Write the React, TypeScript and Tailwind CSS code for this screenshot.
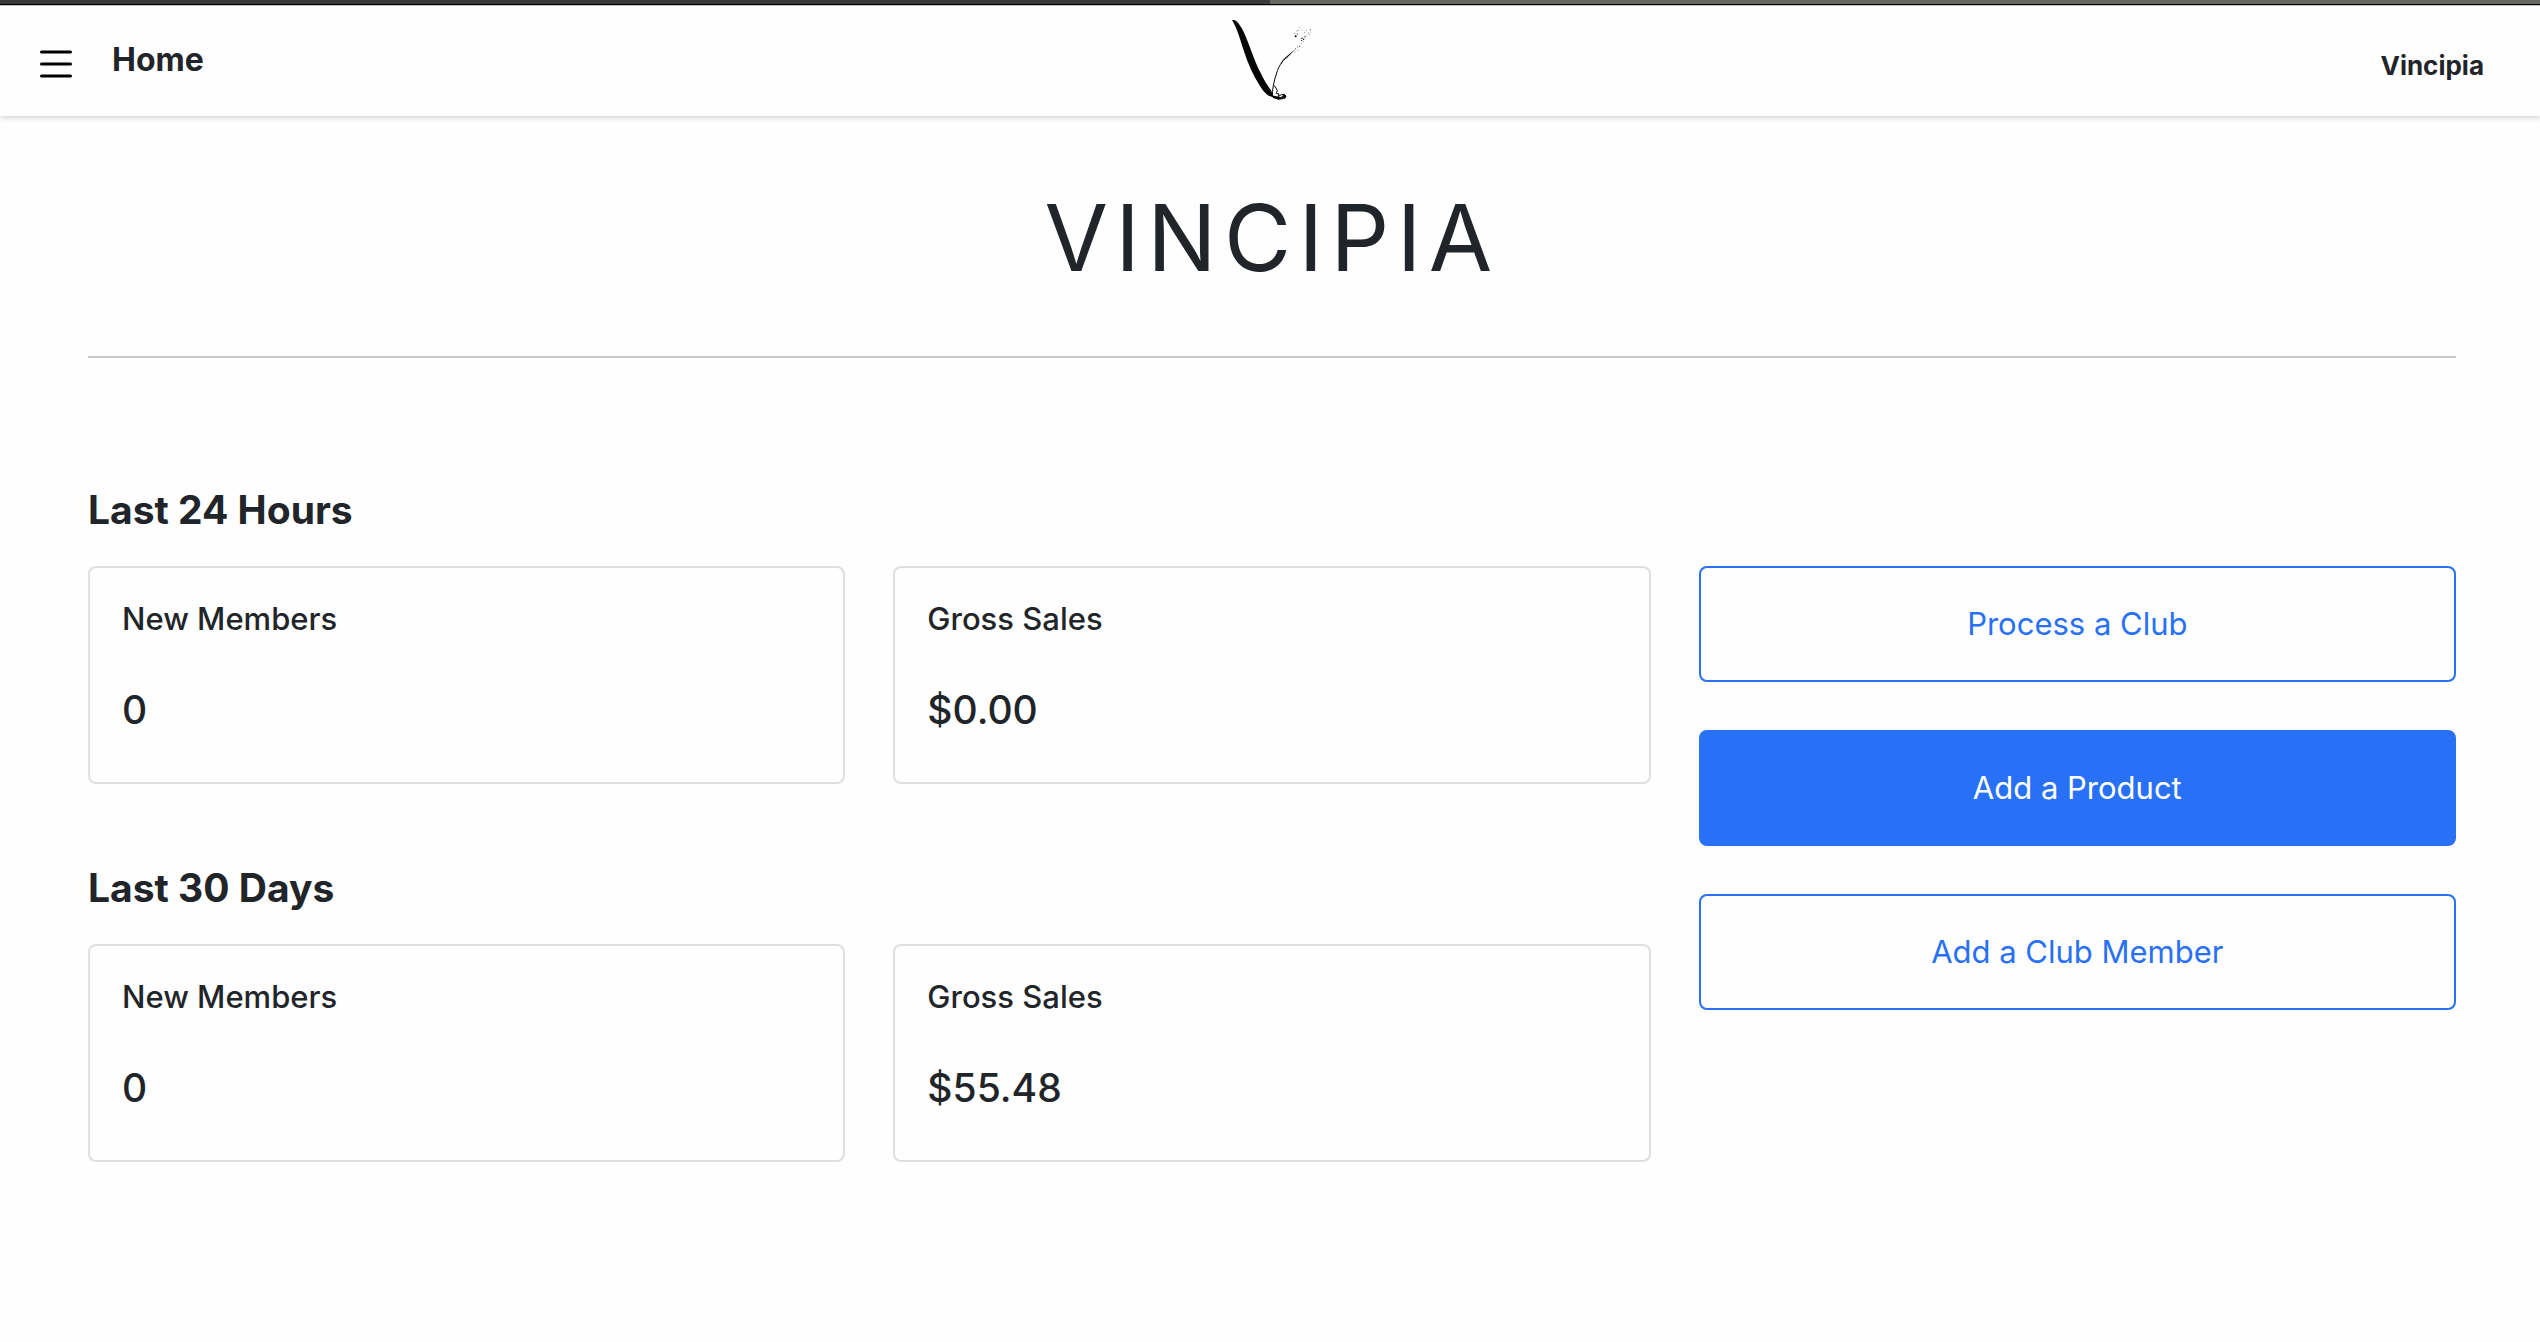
import { clsx } from "clsx";

interface IStat {
  label: string;
  value: string;
}

interface IPeriod {
  title: string;
  stats: IStat[];
}

const periods: IPeriod[] = [
  {
    title: "Last 24 Hours",
    stats: [
      { label: "New Members", value: "0" },
      { label: "Gross Sales", value: "$0.00" },
    ],
  },
  {
    title: "Last 30 Days",
    stats: [
      { label: "New Members", value: "0" },
      { label: "Gross Sales", value: "$55.48" },
    ],
  },
];

const actions = [
  { label: "Process a Club", filled: false },
  { label: "Add a Product", filled: true },
  { label: "Add a Club Member", filled: false },
];

// x, y, radius of the ink splashes
const splashes = [
  [257, 109, 3],
  [253, 101, 1.2],
  [262, 102, 1.8],
  [264, 91, 1.5],
  [268, 82, 1],
  [259, 94, 0.8],
  [276, 90, 1],
  [283, 97, 1.3],
  [290, 92, 1],
  [296, 99, 1.4],
  [301, 89, 1.5],
  [303, 96, 1.1],
  [298, 104, 1.1],
  [289, 105, 1],
  [285, 110, 1.8],
  [276, 115, 2.2],
  [281, 118, 2.2],
  [275, 121, 2],
  [280, 124, 1.2],
  [274, 131, 1.3],
  [269, 139, 1.6],
  [262, 141, 1.4],
  [264, 150, 1.2],
  [257, 146, 1.6],
  [252, 152, 1.6],
  [255, 157, 1],
];

function Logo() {
  return (
    <svg viewBox="54 54 252 252" className="h-[84px] w-[84px]" fill="#050706">
      <path d="M66 60 C76 58 84 65 95 84 C107 106 115 130 125 156 C134 180 142 200 151 217 C161 239 173 258 184 272 L190 291 C174 290 163 278 150 258 C130 228 114 192 101 151 C90 116 80 82 66 60Z" />
      <path
        d="M187 290 C186 270 192 242 200 219 C207 198 214 186 230 171 L248 155"
        fill="none"
        stroke="#050706"
        strokeWidth="3"
      />
      <path
        d="M214 190 L220 180 L230 172 L242 161"
        fill="none"
        stroke="#050706"
        strokeWidth="4"
        strokeDasharray="3 2"
      />
      <path
        d="M192 256 L198 264 L202 272 L199 280 L207 282 L204 290 L214 284 L222 283 L228 288 L225 295 L214 291 L205 297 L188 291"
        fill="none"
        stroke="#050706"
        strokeWidth="3"
      />
      <path d="M184 286 L210 291 L224 296 L206 299 L190 294Z" />
      <circle cx="222" cy="289" r="5" />
      {splashes.map(([x, y, r]) => (
        <circle key={`${x}-${y}`} cx={x} cy={y} r={r} />
      ))}
    </svg>
  );
}

function Header() {
  return (
    <header className="shadow-[0_1px_6px_rgba(0,0,0,0.22)]">
      <div className="flex h-[5px] border-b border-black">
        <div className="flex-1 bg-[#3a3a38]" />
        <div className="flex-1 bg-[#666663]" />
      </div>
      <div className="grid grid-cols-[1fr_auto_1fr] items-center border-t border-[#c0c0c0] px-10 pt-3 pb-[14px]">
        <div className="flex items-center gap-10">
          <button type="button" aria-label="Open menu" className="mt-2">
            <svg
              viewBox="0 0 32 28"
              className="h-7 w-8"
              stroke="#000"
              strokeWidth="3"
              strokeLinecap="round"
            >
              <path d="M1.5 2H30.5M1.5 14H30.5M1.5 26H30.5" />
            </svg>
          </button>
          <a href="#" className="text-[32px] leading-[38px] font-bold">
            Home
          </a>
        </div>
        <Logo />
        <a
          href="#"
          className="mt-3 mr-4 justify-self-end text-[26px] leading-8 font-bold"
        >
          Vincipia
        </a>
      </div>
    </header>
  );
}

function StatCard({ label, value }: IStat) {
  return (
    <div className="rounded-lg border-2 border-[#dfdfdf] p-8">
      <h3 className="text-[31px] leading-[38px] font-medium">{label}</h3>
      <p className="mt-12 mb-4 text-[39px] leading-[48px] font-medium">
        {value}
      </p>
    </div>
  );
}

export default function App() {
  return (
    <div className="min-h-screen bg-[#fefefe] font-['Inter',sans-serif] text-[#212529]">
      <Header />
      <main className="pt-16 pr-[84px] pl-[88px]">
        <h1 className="text-center text-[92px] leading-[116px] tracking-[0.08em]">
          VINCIPIA
        </h1>
        <hr className="mt-15 border-t-2 border-[#c8c8c8]" />

        <div className="mt-32 grid grid-cols-3 gap-12">
          <div className="col-span-2 flex flex-col gap-20">
            {periods.map((period) => (
              <section key={period.title}>
                <h2 className="mb-8 text-[39px] leading-[48px] font-bold">
                  {period.title}
                </h2>
                <div className="grid grid-cols-2 gap-12">
                  {period.stats.map((stat) => (
                    <StatCard key={stat.label} {...stat} />
                  ))}
                </div>
              </section>
            ))}
          </div>

          <div className="flex flex-col gap-12 pt-20">
            {actions.map((action) => (
              <button
                key={action.label}
                type="button"
                className={clsx(
                  "rounded-lg border-2 border-[#2870f5] py-8 text-[31px] leading-[48px]",
                  action.filled ? "bg-[#2870f5] text-white" : "text-[#2870f5]",
                )}
              >
                {action.label}
              </button>
            ))}
          </div>
        </div>
      </main>
    </div>
  );
}
